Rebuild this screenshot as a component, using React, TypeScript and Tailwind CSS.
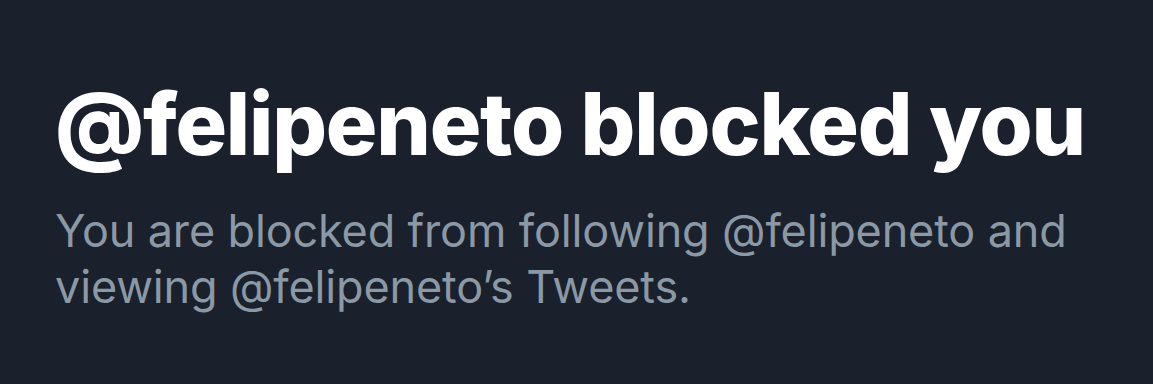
export default function App() {
  return (
    <div className="flex h-[384px] w-[1153px] flex-col bg-[#1a202c] pl-[55px] pt-[72px] font-['Inter',sans-serif]">
      <h1 className="text-[86px] leading-[104px] font-extrabold tracking-[-1.2px] text-white">
        @felipeneto blocked you
      </h1>
      <p className="mt-[27px] w-[1060px] text-[45px] leading-[56px] tracking-[-0.15px] text-[#8b98a5]">
        You are blocked from following @felipeneto and viewing @felipeneto’s Tweets.
      </p>
    </div>
  );
}
